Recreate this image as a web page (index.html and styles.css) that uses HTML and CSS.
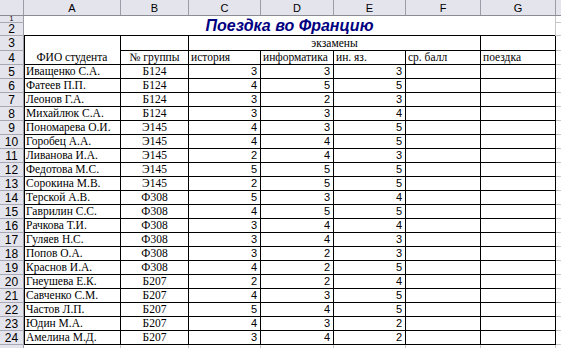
FILE: index.html
```html
<!DOCTYPE html>
<html>
<head>
<meta charset="utf-8">
<link rel="stylesheet" href="styles.css">
</head>
<body>
<div class="sheet">
  <div class="hc corner"></div><div class="hc">A</div><div class="hc">B</div><div class="hc">C</div><div class="hc">D</div><div class="hc">E</div><div class="hc">F</div><div class="hc">G</div><div class="hc"></div>

  <div class="rh r1">1</div><div class="title">Поездка во Францию</div><div class="c x"></div>
  <div class="rh">2</div><div class="c x"></div>

  <div class="rh">3</div><div class="c b l fio">ФИО студента</div><div class="c b"></div><div class="c b ctr exams">экзамены</div><div class="c b"></div><div class="c x"></div>
  <div class="rh">4</div><div class="c b ctr">№ группы</div><div class="c b">история</div><div class="c b">информатика</div><div class="c b">ин. яз.</div><div class="c b">ср. балл</div><div class="c b">поездка</div><div class="c x"></div>

  <div class="rh">5</div><div class="c b l">Иващенко С.А.</div><div class="c b ctr">Б124</div><div class="c b n">3</div><div class="c b n">3</div><div class="c b n">3</div><div class="c b"></div><div class="c b"></div><div class="c x"></div>
  <div class="rh">6</div><div class="c b l">Фатеев П.П.</div><div class="c b ctr">Б124</div><div class="c b n">4</div><div class="c b n">5</div><div class="c b n">5</div><div class="c b"></div><div class="c b"></div><div class="c x"></div>
  <div class="rh">7</div><div class="c b l">Леонов Г.А.</div><div class="c b ctr">Б124</div><div class="c b n">3</div><div class="c b n">2</div><div class="c b n">3</div><div class="c b"></div><div class="c b"></div><div class="c x"></div>
  <div class="rh">8</div><div class="c b l">Михайлюк С.А.</div><div class="c b ctr">Б124</div><div class="c b n">3</div><div class="c b n">3</div><div class="c b n">4</div><div class="c b"></div><div class="c b"></div><div class="c x"></div>
  <div class="rh">9</div><div class="c b l">Пономарева О.И.</div><div class="c b ctr">Э145</div><div class="c b n">4</div><div class="c b n">3</div><div class="c b n">5</div><div class="c b"></div><div class="c b"></div><div class="c x"></div>
  <div class="rh">10</div><div class="c b l">Горобец А.А.</div><div class="c b ctr">Э145</div><div class="c b n">4</div><div class="c b n">4</div><div class="c b n">5</div><div class="c b"></div><div class="c b"></div><div class="c x"></div>
  <div class="rh">11</div><div class="c b l">Ливанова И.А.</div><div class="c b ctr">Э145</div><div class="c b n">2</div><div class="c b n">4</div><div class="c b n">3</div><div class="c b"></div><div class="c b"></div><div class="c x"></div>
  <div class="rh">12</div><div class="c b l">Федотова М.С.</div><div class="c b ctr">Э145</div><div class="c b n">5</div><div class="c b n">5</div><div class="c b n">5</div><div class="c b"></div><div class="c b"></div><div class="c x"></div>
  <div class="rh">13</div><div class="c b l">Сорокина М.В.</div><div class="c b ctr">Э145</div><div class="c b n">2</div><div class="c b n">5</div><div class="c b n">5</div><div class="c b"></div><div class="c b"></div><div class="c x"></div>
  <div class="rh">14</div><div class="c b l">Терской А.В.</div><div class="c b ctr">Ф308</div><div class="c b n">5</div><div class="c b n">3</div><div class="c b n">4</div><div class="c b"></div><div class="c b"></div><div class="c x"></div>
  <div class="rh">15</div><div class="c b l">Гаврилин С.С.</div><div class="c b ctr">Ф308</div><div class="c b n">4</div><div class="c b n">5</div><div class="c b n">5</div><div class="c b"></div><div class="c b"></div><div class="c x"></div>
  <div class="rh">16</div><div class="c b l">Рачкова Т.И.</div><div class="c b ctr">Ф308</div><div class="c b n">3</div><div class="c b n">4</div><div class="c b n">4</div><div class="c b"></div><div class="c b"></div><div class="c x"></div>
  <div class="rh">17</div><div class="c b l">Гуляев Н.С.</div><div class="c b ctr">Ф308</div><div class="c b n">3</div><div class="c b n">4</div><div class="c b n">3</div><div class="c b"></div><div class="c b"></div><div class="c x"></div>
  <div class="rh">18</div><div class="c b l">Попов О.А.</div><div class="c b ctr">Ф308</div><div class="c b n">3</div><div class="c b n">2</div><div class="c b n">3</div><div class="c b"></div><div class="c b"></div><div class="c x"></div>
  <div class="rh">19</div><div class="c b l">Краснов И.А.</div><div class="c b ctr">Ф308</div><div class="c b n">4</div><div class="c b n">2</div><div class="c b n">5</div><div class="c b"></div><div class="c b"></div><div class="c x"></div>
  <div class="rh">20</div><div class="c b l">Гнеушева Е.К.</div><div class="c b ctr">Б207</div><div class="c b n">2</div><div class="c b n">2</div><div class="c b n">4</div><div class="c b"></div><div class="c b"></div><div class="c x"></div>
  <div class="rh">21</div><div class="c b l">Савченко С.М.</div><div class="c b ctr">Б207</div><div class="c b n">4</div><div class="c b n">3</div><div class="c b n">5</div><div class="c b"></div><div class="c b"></div><div class="c x"></div>
  <div class="rh">22</div><div class="c b l">Частов Л.П.</div><div class="c b ctr">Б207</div><div class="c b n">5</div><div class="c b n">4</div><div class="c b n">5</div><div class="c b"></div><div class="c b"></div><div class="c x"></div>
  <div class="rh">23</div><div class="c b l">Юдин М.А.</div><div class="c b ctr">Б207</div><div class="c b n">4</div><div class="c b n">3</div><div class="c b n">2</div><div class="c b"></div><div class="c b"></div><div class="c x"></div>
  <div class="rh">24</div><div class="c b l">Амелина М.Д.</div><div class="c b ctr">Б207</div><div class="c b n">3</div><div class="c b n">4</div><div class="c b n">2</div><div class="c b"></div><div class="c b"></div><div class="c x"></div>

  <div class="rh"></div><div class="c"></div><div class="c"></div><div class="c"></div><div class="c"></div><div class="c"></div><div class="c"></div><div class="c"></div><div class="c"></div>
</div>
</body>
</html>
```

FILE: styles.css
```css
html, body {
  margin: 0;
  padding: 0;
  background: #fff;
}

.sheet {
  display: grid;
  grid-template-columns: 23px 96px 67px 71px 72px 71px 74px 74px 20px;
  grid-template-rows: 15px 6px 12px 14px 13px repeat(20, 13px) 12px;
  gap: 1px;
  background: #c6c6c6;
  width: 561px;
  height: 348px;
  overflow: hidden;
}

.hc {
  background: #e4e4ec;
  font: 11px "Liberation Sans", Arial, sans-serif;
  color: #000;
  display: flex;
  align-items: center;
  justify-content: center;
  box-shadow: 1px 0 0 #9d9daa, 0 1px 0 #8c8c96, 1px 1px 0 #8c8c96;
  overflow: hidden;
}

.rh {
  background: #e4e4ec;
  font: 12px "Liberation Sans", Arial, sans-serif;
  color: #000;
  display: flex;
  align-items: center;
  justify-content: center;
  box-shadow: 1px 0 0 #9d9daa, 0 1px 0 #a8a8b4, 1px 1px 0 #a8a8b4;
  overflow: hidden;
}

.r1 {
  font-size: 7px;
  line-height: 6px;
}

.title {
  grid-column: 2 / 9;
  grid-row: 2 / 4;
  background: #fff;
  display: flex;
  align-items: flex-end;
  justify-content: center;
  font: italic bold 16px "Liberation Sans", Arial, sans-serif;
  color: #000080;
  box-shadow: 0 1px 0 #000;
  overflow: visible;
}

.c {
  background: #fff;
  font: 11.5px "Liberation Serif", "Times New Roman", serif;
  color: #000;
  line-height: 13px;
  display: flex;
  align-items: flex-end;
  padding: 0 2px;
  white-space: nowrap;
  overflow: hidden;
}

.b {
  box-shadow: 1px 0 0 #000, 0 1px 0 #000, 1px 1px 0 #000;
}

.l {
  border-left: 1px solid #000;
  padding-left: 1px;
}

.ctr {
  justify-content: center;
}

.n {
  font: 11px "Liberation Sans", Arial, sans-serif;
  line-height: 13px;
  justify-content: flex-end;
  padding-right: 3px;
}

.fio {
  grid-row: span 2;
  justify-content: center;
}

.exams {
  grid-column: span 4;
  line-height: 14px;
}

.x {
  background: #fff;
}
```
